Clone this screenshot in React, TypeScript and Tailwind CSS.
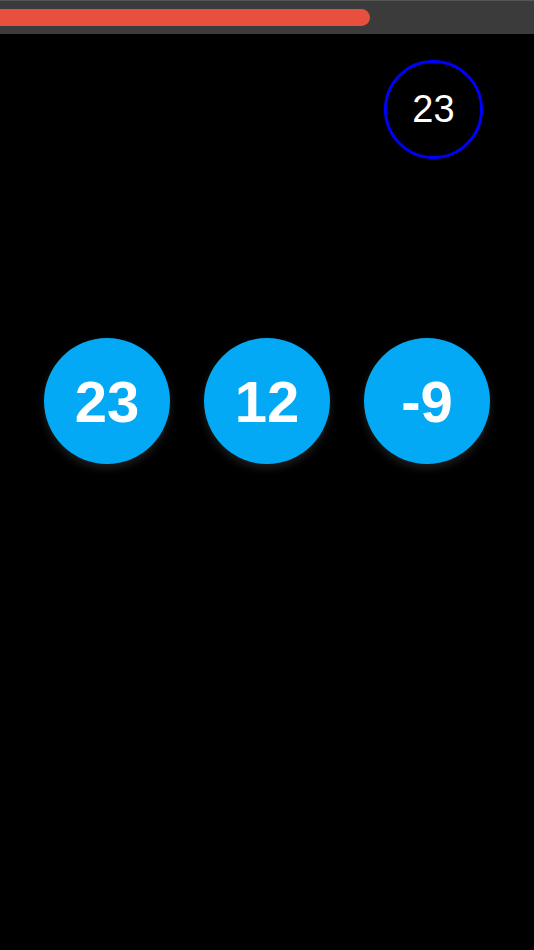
import React from 'react'

const values = [23, 12, -9]

export default function App() {
  return (
    <div className="min-h-[950px] bg-black font-['Liberation_Sans',Arial,sans-serif]">
      {/* Progress header */}
      <div className="h-[34px] bg-[#3b3b3b] border-t border-[#555] flex items-center">
        <div className="h-[17px] w-[370px] bg-[#e84f3f] rounded-r-full" />
      </div>

      {/* Current value */}
      <div className="flex justify-end pr-[51px] pt-[26px]">
        <div className="w-[99px] h-[99px] rounded-full border-[3px] border-[#0000ff] flex items-center justify-center text-white text-[38px]">
          23
        </div>
      </div>

      {/* Choices */}
      <div className="flex justify-center gap-[34px] mt-[179px]">
        {values.map((v) => (
          <button
            key={v}
            className="w-[126px] h-[126px] rounded-full bg-[#03a9f4] text-white font-bold text-[58px] flex items-center justify-center shadow-[0_4px_8px_rgba(255,255,255,0.12)]"
          >
            {v}
          </button>
        ))}
      </div>
    </div>
  )
}
